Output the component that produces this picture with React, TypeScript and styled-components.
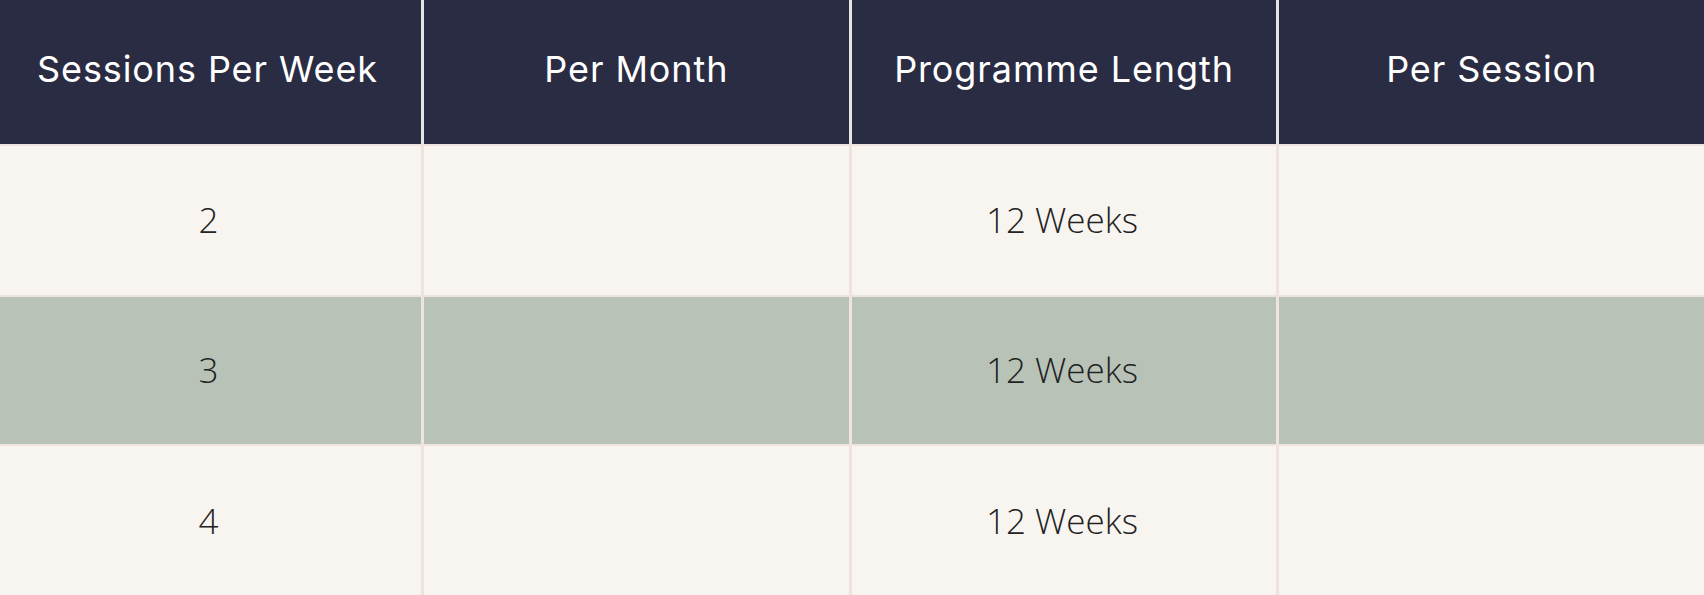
import React from 'react';
import styled, {createGlobalStyle} from 'styled-components';

const GlobalStyle = createGlobalStyle`
	html, body {
		margin: 0;
		padding: 0;
		background: #f8f4ef;
	}
	body {
		font-family: 'Open Sans', 'Liberation Sans', sans-serif;
	}
`;

const Table = styled.div`
	display: flex;
	flex-direction: column;
	gap: 2px;
	width: 1704px;
	height: 595px;
	overflow: hidden;
	background: #eee3df;
`;

const Row = styled.div<{$height: number}>`
	display: grid;
	grid-template-columns: 421px 1fr 1fr 1fr;
	column-gap: 3px;
	height: ${({$height}) => $height}px;
	flex-shrink: 0;
`;

const HeaderRow = styled(Row)`
	background: #e6e3e6;
`;

const HeaderCell = styled.div`
	display: flex;
	align-items: center;
	justify-content: center;
	padding-bottom: 7px;
	background: #2a2c43;
	color: #ffffff;
	font-family: Inter, 'Noto Sans', sans-serif;
	font-weight: 400;
	font-size: 36px;
	letter-spacing: 0.9px;

	&:first-child {
		padding-right: 6px;
	}
`;

const Cell = styled.div<{$alt?: boolean}>`
	display: flex;
	align-items: center;
	justify-content: center;
	padding-bottom: 2px;
	padding-right: 4px;
	background: ${({$alt}) => ($alt ? '#b8c2b7' : '#f8f4ef')};
	color: #222222;
	font-family: 'Open Sans', 'Liberation Sans', sans-serif;
	font-weight: 300;
	font-size: 35px;
`;

const headings = ['Sessions Per Week', 'Per Month', 'Programme Length', 'Per Session'];

const rows = [
	{sessions: '2', height: 149},
	{sessions: '3', height: 147},
	{sessions: '4', height: 150},
];

export default function App() {
	return (
		<>
			<GlobalStyle />
			<Table>
				<HeaderRow $height={144}>
					{headings.map((h) => (
						<HeaderCell key={h}>{h}</HeaderCell>
					))}
				</HeaderRow>
				{rows.map((r, i) => (
					<Row key={r.sessions} $height={r.height}>
						<Cell $alt={i === 1}>{r.sessions}</Cell>
						<Cell $alt={i === 1} />
						<Cell $alt={i === 1}>12 Weeks</Cell>
						<Cell $alt={i === 1} />
					</Row>
				))}
			</Table>
		</>
	);
}
